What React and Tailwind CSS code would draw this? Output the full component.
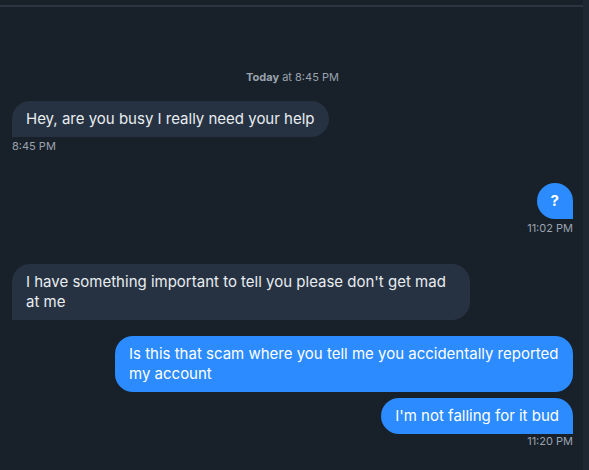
import React from 'react';

const font = { fontFamily: 'Inter, "Noto Sans", sans-serif' };

function Incoming({ children, time, className = '' }) {
  return (
    <div className={`flex flex-col items-start ${className}`}>
      <div className="max-w-[458px] rounded-[18px] rounded-bl-none bg-[#263241] px-[14px] py-[8px] text-[15px] leading-[20px] text-[#e9edf1]">
        {children}
      </div>
      {time && <div className="mt-[2px] text-[11px] leading-[14px] text-[#9aa3ad]">{time}</div>}
    </div>
  );
}

function Outgoing({ children, time, timeGap = 'mt-[2px]', last = true, bold = false, className = '' }) {
  return (
    <div className={`flex flex-col items-end ${className}`}>
      <div
        className={`max-w-[458px] rounded-[18px] ${last ? 'rounded-br-none' : ''} bg-[#2b8bff] px-[14px] py-[8px] text-[15px] leading-[20px] text-white ${bold ? 'font-bold' : ''}`}
      >
        {children}
      </div>
      {time && <div className={`${timeGap} text-[11px] leading-[14px] text-[#9aa3ad]`}>{time}</div>}
    </div>
  );
}

export default function App() {
  return (
    <div className="flex h-[470px] w-[589px] overflow-hidden bg-[#18202a]" style={font}>
      <div className="flex min-w-0 flex-1 flex-col">
        <div className="h-[5px]" />
        <div className="h-[2px] bg-[#2c3541]" />
        <div className="flex flex-col pl-[12px] pr-[10px] pt-[63px]">
          <div className="text-center text-[11px] leading-[14px] text-[#9aa3ad]">
            <span className="font-bold">Today</span> at 8:45 PM
          </div>
          <Incoming time="8:45 PM" className="mt-[17px]">
            Hey, are you busy I really need your help
          </Incoming>
          <Outgoing time="11:02 PM" bold className="mt-[30px]">
            ?
          </Outgoing>
          <Incoming className="mt-[29px]">
            I have something important to tell you please don't get mad at me
          </Incoming>
          <Outgoing last={false} className="mt-[16px]">
            Is this that scam where you tell me you accidentally reported my account
          </Outgoing>
          <Outgoing time="11:20 PM" timeGap="mt-[0px]" className="mt-[6px]">
            I'm not falling for it bud
          </Outgoing>
        </div>
      </div>
      <div className="w-[6px] bg-[#1f2732]" />
    </div>
  );
}
